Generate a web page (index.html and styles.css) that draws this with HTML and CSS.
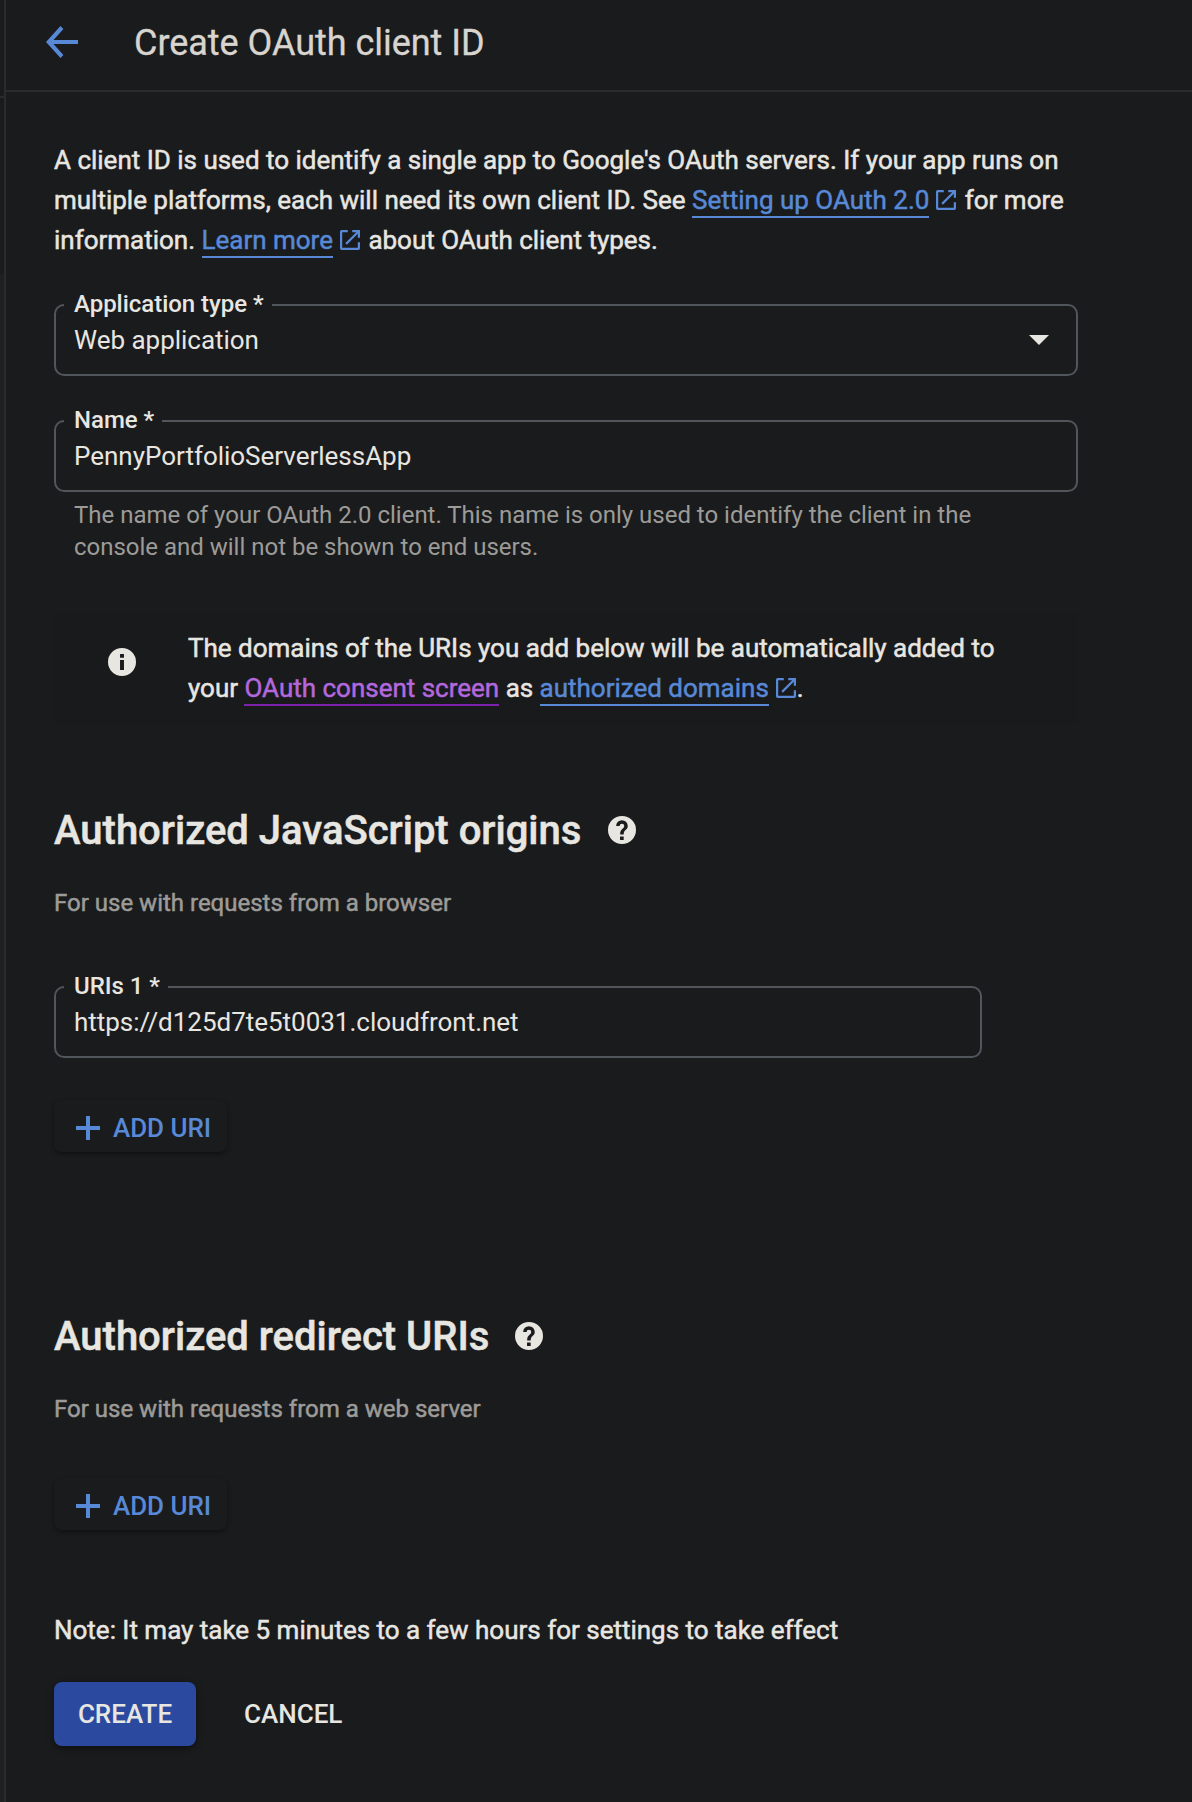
FILE: index.html
```html
<!DOCTYPE html>
<html lang="en">
<head>
<meta charset="utf-8">
<title>Create OAuth client ID</title>
<link rel="stylesheet" href="styles.css">
</head>
<body>
<svg class="sprite" aria-hidden="true">
  <symbol id="external" viewBox="3 3 18 18"><path d="M19 19H5V5h5V3H4.500Q3 3 3 4.500v15Q3 21 4.500 21h15q1.500 0 1.500-1.500V14h-2v5zM14 3v2h3.600l-9.800 9.800 1.400 1.400L19 6.400V10h2V3h-7z"/></symbol>
  <symbol id="help" viewBox="2 2 20 20"><path d="M12 2a10 10 0 1 0 0 20 10 10 0 0 0 0-20zm1.200 17.200h-2.600v-2.500h2.600v2.500zm2.070-7.950-.9.920C13.650 12.900 13.200 13.500 13.200 15.200h-2.500v-.7c0-1.100.45-2.100 1.170-2.830l1.240-1.260c.3-.36.49-.76.49-1.310a1.650 1.650 0 1 0-3.300 0H7.800a4.150 4.150 0 1 1 8.300 0c0 .88-.26 1.580-.83 2.150z"/></symbol>
  <symbol id="plus" viewBox="0 0 24 24"><path d="M10 0h4v10h10v4H14v10h-4V14H0v-4h10z"/></symbol>
</svg>
<div class="shell">
  <aside class="rail"><div class="rail-head"></div><div class="rail-body"></div></aside>
  <main class="page">
    <header class="topbar">
      <svg class="back" viewBox="0 0 32 32"><path d="M32 14H7.500L17.400 3 14.500 0 0 16l14.500 16 2.900-3L7.500 18H32z"/></svg>
      <h1 class="title">Create OAuth client ID</h1>
    </header>
    <form class="form">
      <p class="text intro">A client ID is used to identify a single app to Google's OAuth servers. If your app runs on<br>multiple platforms, each will need its own client ID. See <a class="link">Setting up OAuth 2.0</a><svg class="external"><use href="#external"/></svg> for more<br>information. <a class="link">Learn more</a><svg class="external"><use href="#external"/></svg> about OAuth client types.</p>

      <fieldset class="field">
        <legend class="label">Application type *</legend>
        <div class="value">Web application</div>
        <svg class="caret" viewBox="0 0 20 10"><path d="M0 0h20L10 10z"/></svg>
      </fieldset>

      <fieldset class="field field-name">
        <legend class="label">Name *</legend>
        <div class="value">PennyPortfolioServerlessApp</div>
      </fieldset>
      <p class="hint">The name of your OAuth 2.0 client. This name is only used to identify the client in the<br>console and will not be shown to end users.</p>

      <div class="notice">
        <svg class="info" viewBox="2 2 20 20"><path d="M12 2a10 10 0 1 0 0 20 10 10 0 0 0 0-20zm1.400 15.700h-2.800v-7.200h2.800v7.200zm0-8.700h-2.800V6.300h2.800V9z"/></svg>
        <p class="text">The domains of the URIs you add below will be automatically added to<br>your <a class="link visited">OAuth consent screen</a> as <a class="link">authorized domains</a><svg class="external"><use href="#external"/></svg>.</p>
      </div>

      <section class="group origins">
        <div class="group-head"><h2 class="heading">Authorized JavaScript origins</h2><svg class="help"><use href="#help"/></svg></div>
        <p class="sub">For use with requests from a browser</p>
        <fieldset class="field field-uri">
          <legend class="label">URIs 1 *</legend>
          <div class="value">https://d125d7te5t0031.cloudfront.net</div>
        </fieldset>
        <button class="add" type="button"><svg class="plus"><use href="#plus"/></svg>ADD URI</button>
      </section>

      <section class="group redirects">
        <div class="group-head"><h2 class="heading">Authorized redirect URIs</h2><svg class="help"><use href="#help"/></svg></div>
        <p class="sub">For use with requests from a web server</p>
        <button class="add" type="button"><svg class="plus"><use href="#plus"/></svg>ADD URI</button>
      </section>

      <p class="text note">Note: It may take 5 minutes to a few hours for settings to take effect</p>
      <div class="actions">
        <button class="create" type="button">CREATE</button>
        <button class="cancel" type="button">CANCEL</button>
      </div>
    </form>
  </main>
</div>
</body>
</html>
```
FILE: styles.css
```css
* { box-sizing: border-box; }
body {
  margin: 0;
  background: #1a1b1d;
  color: #e8e6e1;
  font-family: Roboto, "Liberation Sans", sans-serif;
  font-size: 26px;
}
p, h1, h2 { margin: 0; font-weight: 400; }
.sprite { display: none; }
.shell { display: flex; height: 1802px; overflow: hidden; }
.rail { width: 6px; border-right: 2px solid #2a2b2d; background: #1a1b1d; }
.rail-head { height: 98px; border-bottom: 2px solid #2a2b2d; }
.rail-body { height: 1528px; margin-top: 176px; background: #1f2022; }
.page { flex: 1; }
.topbar {
  display: flex;
  align-items: center;
  height: 92px;
  padding: 0 0 6px 40px;
  border-bottom: 2px solid #2a2b2d;
}
.back { width: 32px; height: 32px; fill: #5889d6; }
.title { margin-left: 56px; padding-top: 1px; font-size: 36px; line-height: 48px; letter-spacing: -0.03px; color: #d8d4cf; white-space: nowrap; -webkit-text-stroke: 0.3px currentColor; }
.form { width: 1072px; padding: 48px 0 0 48px; }
.text { font-size: 26px; line-height: 40px; letter-spacing: -0.01px; white-space: nowrap; -webkit-text-stroke: 0.5px currentColor; }
.link { padding-bottom: 1px; color: #5889d6; border-bottom: 2px solid #5889d6; }
.visited { color: #b268dc; border-color: #7d23ab; }
.external { width: 20px; height: 20px; margin: 0 2px 0 7px; fill: #5889d6; vertical-align: -1px; }
.notice .external { margin-right: 1px; }
.field {
  display: flex;
  height: 86px;
  margin: 0;
  padding: 0 27px 0 18px;
  border: 2px solid #50565b;
  border-radius: 10px;
}
.intro + .field { margin-top: 30px; }
.label {
  height: 30px;
  margin-left: -10px;
  padding: 0 8px 0 10px;
  font-size: 24px;
  line-height: 28px;
  font-weight: 500;
  letter-spacing: -0.03px;
}
.value { flex: 1; font-size: 26px; line-height: 40px; letter-spacing: -0.02px; }
.caret { width: 20px; height: 10px; margin-top: 15px; fill: #e8e6e1; }
.field-name { margin-top: 30px; }
.hint { padding: 7px 0 0 20px; font-size: 24px; line-height: 32px; letter-spacing: -0.01px; color: #9d9b98; white-space: nowrap; }
.notice {
  display: flex;
  height: 113px;
  margin-top: 49px;
  padding: 16px 0 0 54px;
  background: #191a1c;
}
.info { width: 28px; height: 28px; margin: 20px 52px 0 0; fill: #e8e6e1; }
.group-head { display: flex; align-items: center; height: 56px; }
.origins { margin-top: 77px; }
.heading { padding-top: 2px; font-size: 40px; font-weight: 500; line-height: 56px; white-space: nowrap; -webkit-text-stroke: 0.5px currentColor; }
.help { width: 28px; height: 28px; margin-left: 27px; fill: #e8e6e1; }
.redirects .help { margin-left: 26px; }
.sub { margin-top: 29px; font-size: 24px; line-height: 32px; color: #9d9b98; -webkit-text-stroke: 0.5px currentColor; }
.field-uri { width: 928px; margin-top: 53px; }
button { border: 0; padding: 0; background: none; font: 500 26px/52px Roboto, sans-serif; color: #e8e6e1; }
.add {
  display: flex;
  align-items: center;
  width: 173px;
  height: 52px;
  margin-top: 42px;
  padding: 3px 0 0 22px;
  border-radius: 8px;
  letter-spacing: -0.05px;
  color: #5889d6;
  box-shadow: 0 2px 4px rgba(0, 0, 0, .4);
}
.plus { width: 24px; height: 24px; margin-right: 13px; fill: #5889d6; }
.redirects { margin-top: 156px; }
.redirects .add { margin-top: 53px; }
.note { margin-top: 80px; }
.actions { display: flex; margin-top: 32px; }
.create {
  width: 142px;
  height: 64px;
  border-radius: 8px;
  background: #2b4a9f;
  box-shadow: 0 2px 6px rgba(0, 0, 0, .5);
}
.cancel { margin-left: 48px; }
```
